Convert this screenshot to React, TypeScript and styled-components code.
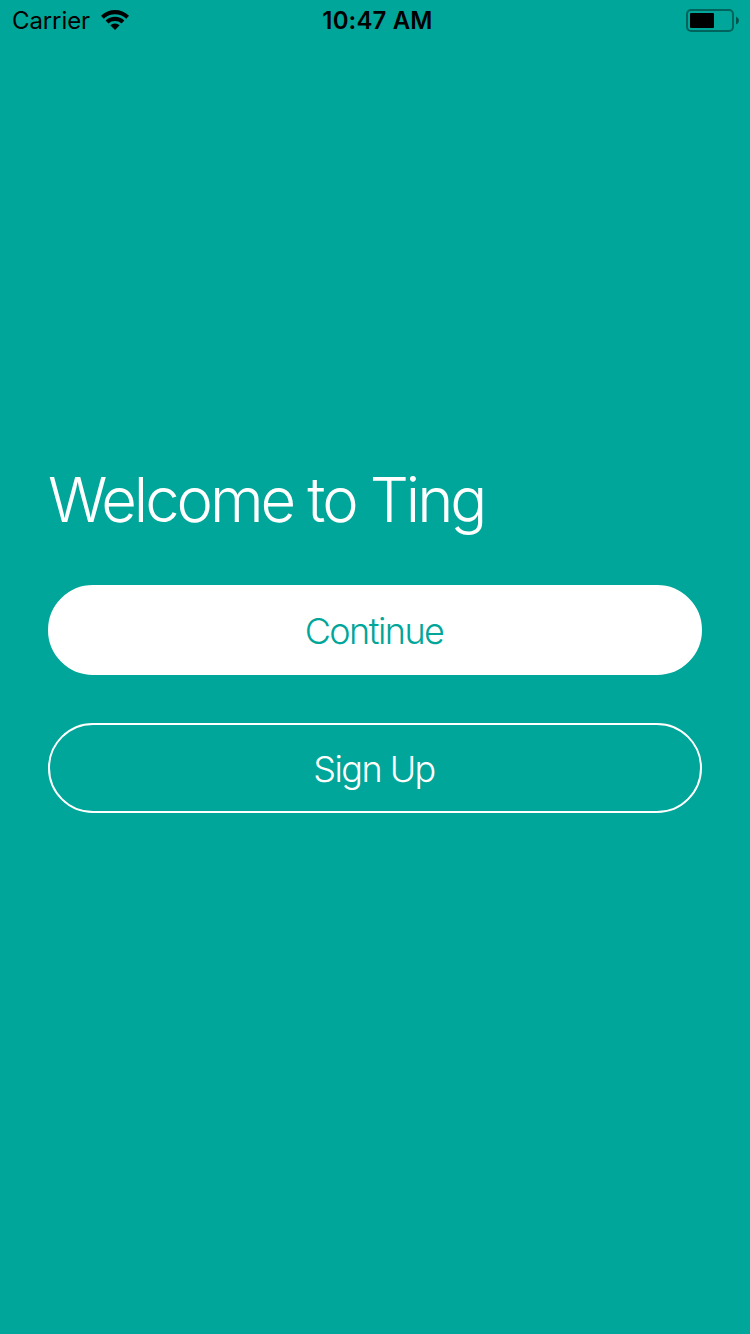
import React from "react";
import styled, { createGlobalStyle } from "styled-components";

const GlobalStyle = createGlobalStyle`
  * { box-sizing: border-box; }
  body { margin: 0; background: #00a699; font-family: Inter, "Liberation Sans", sans-serif; }
`;

const Screen = styled.main`
  display: flex;
  flex-direction: column;
  width: 750px;
  height: 1334px;
  background: #00a699;
  overflow: hidden;
`;

const StatusBar = styled.header`
  display: grid;
  grid-template-columns: 1fr auto 1fr;
  align-items: center;
  height: 42px;
  padding: 0 10px 0 12px;
  color: #000;
  font-size: 24px;
  line-height: 42px;
`;

const Carrier = styled.div`
  display: flex;
  align-items: center;
  gap: 11px;
  letter-spacing: -0.1px;
`;

const WifiIcon = styled.svg`
  margin-bottom: 2px;
`;

const Clock = styled.time`
  padding-left: 3px;
  font-weight: 600;
  letter-spacing: 0.15px;
`;

const BatteryIcon = styled.svg`
  justify-self: end;
`;

const Content = styled.section`
  display: flex;
  flex-direction: column;
  padding: 418px 48px 0;
`;

const Title = styled.h1`
  margin: 0 0 45px;
  color: #fff;
  font-size: 61.5px;
  font-weight: 300;
  line-height: 80px;
  letter-spacing: -3.05px;
`;

const Button = styled.button<{ $filled?: boolean }>`
  height: 90px;
  margin: 0 0 48px;
  padding: 2px 2px 0 0;
  border: 2px solid #fff;
  border-radius: 45px;
  background: ${(p) => (p.$filled ? "#fff" : "transparent")};
  color: ${(p) => (p.$filled ? "#00a699" : "#fff")};
  font-family: inherit;
  font-size: 36px;
  font-weight: 300;
  letter-spacing: -1.55px;
`;

export default function App() {
  return (
    <Screen>
      <GlobalStyle />
      <StatusBar>
        <Carrier>
          <span>Carrier</span>
          <WifiIcon width="28" height="20" viewBox="0 0 28 20">
            <path d="M0 5.8Q6.2 0 14 0t14 5.8L25.3 8.7Q20.2 4.3 14 4.3T2.7 8.7z" />
            <path d="M4.6 10.5Q8.7 6.8 14 6.8t9.4 3.7l-2.8 2.9Q17.8 11 14 11t-6.6 2.4z" />
            <path d="M9.3 15.3Q11.3 13.5 14 13.5t4.7 1.8L14 20z" />
          </WifiIcon>
        </Carrier>
        <Clock>10:47 AM</Clock>
        <BatteryIcon width="54" height="24" viewBox="0 0 54 24">
          <rect x="1" y="1" width="46" height="21" rx="4" fill="none" stroke="#000" strokeOpacity=".4" strokeWidth="2" />
          <rect x="4" y="4" width="24" height="15" rx="1" />
          <path d="M50 7.5q3 1.5 3 4t-3 4z" fillOpacity=".5" />
        </BatteryIcon>
      </StatusBar>
      <Content>
        <Title>Welcome to Ting</Title>
        <Button $filled>Continue</Button>
        <Button>Sign Up</Button>
      </Content>
    </Screen>
  );
}
